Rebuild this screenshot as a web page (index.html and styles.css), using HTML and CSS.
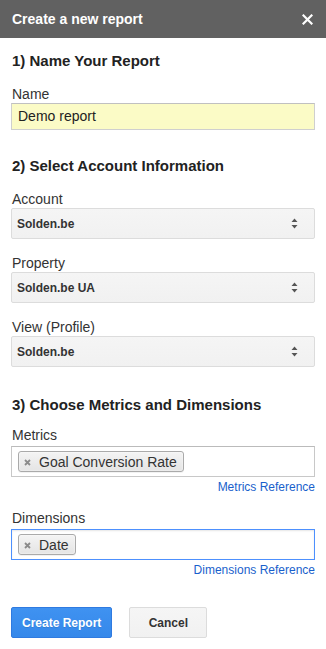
FILE: index.html
```html
<!DOCTYPE html>
<html>
<head>
<meta charset="utf-8">
<title>Create a new report</title>
<link rel="stylesheet" href="styles.css">
</head>
<body>
<div class="dialog">
  <div class="header">
    <span class="title">Create a new report</span>
    <svg class="close" width="11" height="11" viewBox="0 0 11 11"><path d="M1.5 1.5L9.5 9.5M9.5 1.5L1.5 9.5" stroke="#fff" stroke-width="2.2" stroke-linecap="square"/></svg>
  </div>
  <div class="content">
    <h2 class="section-title first">1) Name Your Report</h2>
    <div class="field">
      <label class="label">Name</label>
      <div class="input">Demo report</div>
    </div>

    <h2 class="section-title">2) Select Account Information</h2>
    <div class="field">
      <label class="label">Account</label>
      <div class="select"><span>Solden.be</span><svg class="arrows" width="7" height="11" viewBox="0 0 7 11"><path d="M3.5 0.5L6.5 4H0.5Z M3.5 10.5L6.5 7H0.5Z" fill="#555"/></svg></div>
    </div>
    <div class="field">
      <label class="label">Property</label>
      <div class="select"><span>Solden.be UA</span><svg class="arrows" width="7" height="11" viewBox="0 0 7 11"><path d="M3.5 0.5L6.5 4H0.5Z M3.5 10.5L6.5 7H0.5Z" fill="#555"/></svg></div>
    </div>
    <div class="field">
      <label class="label">View (Profile)</label>
      <div class="select"><span>Solden.be</span><svg class="arrows" width="7" height="11" viewBox="0 0 7 11"><path d="M3.5 0.5L6.5 4H0.5Z M3.5 10.5L6.5 7H0.5Z" fill="#555"/></svg></div>
    </div>

    <h2 class="section-title third">3) Choose Metrics and Dimensions</h2>
    <div class="field field-metrics">
      <label class="label label-tags">Metrics</label>
      <div class="tags">
        <span class="chip"><svg class="chip-x" width="7" height="7" viewBox="0 0 7 7"><path d="M1 1L6 6M6 1L1 6" stroke="#8a8a8a" stroke-width="1.8"/></svg>Goal Conversion Rate</span>
      </div>
      <div class="ref"><a href="#">Metrics Reference</a></div>
    </div>
    <div class="field field-dims">
      <label class="label label-tags">Dimensions</label>
      <div class="tags focused">
        <span class="chip"><svg class="chip-x" width="7" height="7" viewBox="0 0 7 7"><path d="M1 1L6 6M6 1L1 6" stroke="#8a8a8a" stroke-width="1.8"/></svg>Date</span>
      </div>
      <div class="ref"><a href="#">Dimensions Reference</a></div>
    </div>

    <div class="buttons">
      <button class="btn primary">Create Report</button>
      <button class="btn secondary">Cancel</button>
    </div>
  </div>
</div>
</body>
</html>
```

FILE: styles.css
```css
html, body {
  margin: 0;
  padding: 0;
  background: #fff;
}
body {
  font-family: "Liberation Sans", Arial, sans-serif;
  color: #222;
}
.dialog {
  width: 326px;
}
.header {
  height: 38px;
  background: #616161;
  display: flex;
  align-items: center;
  justify-content: space-between;
  padding: 0 12px 0 12px;
  box-sizing: border-box;
}
.title {
  color: #fff;
  font-weight: bold;
  font-size: 14px;
  line-height: 17px;
}
.close {
  display: block;
  margin-right: 1px;
}
.content {
  padding: 0 11px;
}
.section-title {
  margin: 27px 0 0 0;
  font-size: 15px;
  line-height: 18px;
  font-weight: bold;
  color: #222;
  padding-left: 1px;
}
.section-title.first {
  margin-top: 14px;
}
.section-title.third {
  margin-top: 29px;
}
.field {
  margin-top: 16px;
}
.field-metrics {
  margin-top: 13px;
}
.field-dims {
  margin-top: 15px;
}
.label {
  display: block;
  font-size: 14px;
  line-height: 17px;
  color: #333;
  padding-left: 1px;
  margin-bottom: 0;
}
.label-tags {
  margin-bottom: 2px;
}
.input {
  height: 27px;
  box-sizing: border-box;
  border: 1px solid #cfcfcf;
  border-top-color: #c0c0c0;
  background: #fbfbc6;
  font-size: 14px;
  line-height: 25px;
  padding-left: 6px;
  color: #222;
}
.select {
  height: 31px;
  box-sizing: border-box;
  border: 1px solid #dcdcdc;
  border-radius: 2px;
  background: linear-gradient(#f5f5f5, #f1f1f1);
  display: flex;
  align-items: center;
  justify-content: space-between;
  padding: 0 16px 0 5px;
  font-size: 12px;
  font-weight: bold;
  color: #333;
}
.arrows {
  display: block;
}
.tags {
  height: 31px;
  box-sizing: border-box;
  border: 1px solid #c8c8c8;
  border-top-color: #bbb;
  background: #fff;
  display: flex;
  align-items: center;
  padding: 0 6px;
}
.tags.focused {
  border-color: #4d90fe;
  box-shadow: inset 0 1px 2px rgba(0,0,0,0.1);
}
.chip {
  display: inline-flex;
  align-items: center;
  height: 21px;
  box-sizing: border-box;
  border: 1px solid #aaa;
  border-radius: 3px;
  background: linear-gradient(#f4f4f4, #e4e4e4);
  padding: 0 6px 0 5px;
  font-size: 14px;
  color: #333;
  box-shadow: 0 0 2px #fff inset, 0 1px 0 rgba(0,0,0,0.05);
}
.chip-x {
  display: block;
  margin-right: 8px;
  margin-top: 1px;
}
.ref {
  text-align: right;
  font-size: 12px;
  line-height: 15px;
  margin-top: 3px;
}
.ref a {
  color: #1a5fcc;
  text-decoration: none;
}
.buttons {
  margin-top: 29px;
  display: flex;
  gap: 17px;
}
.btn {
  height: 31px;
  box-sizing: border-box;
  border-radius: 2px;
  font-family: "Liberation Sans", Arial, sans-serif;
  font-size: 12px;
  font-weight: bold;
  padding: 0 10px;
  margin: 0;
}
.primary {
  background: linear-gradient(#3f92f1, #3588ea);
  border: 1px solid #2f7ae0;
  color: #fff;
  min-width: 100px;
  text-shadow: 0 1px rgba(0,0,0,0.1);
}
.secondary {
  background: linear-gradient(#f5f5f5, #f1f1f1);
  border: 1px solid #dcdcdc;
  color: #333;
  min-width: 78px;
}
```
